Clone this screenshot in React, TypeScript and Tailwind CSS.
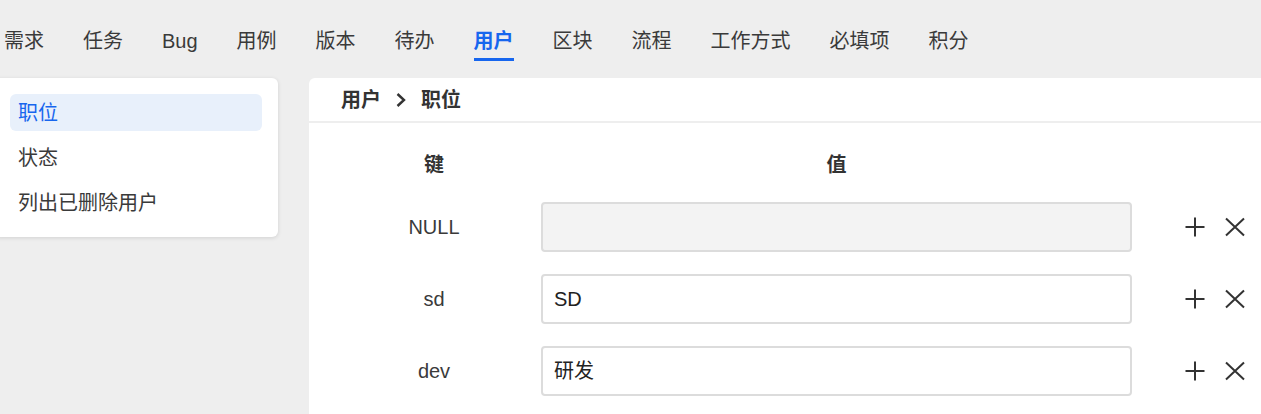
import React from 'react';

const TABS = ['需求', '任务', 'Bug', '用例', '版本', '待办', '用户', '区块', '流程', '工作方式', '必填项', '积分'];
const MENU = ['职位', '状态', '列出已删除用户'];
const ROWS = [
  { key: 'NULL', value: '', disabled: true },
  { key: 'sd', value: 'SD', disabled: false },
  { key: 'dev', value: '研发', disabled: false },
];

const PlusIcon = () => (
  <svg width="20" height="20" viewBox="0 0 20 20" fill="none" stroke="#333" strokeWidth="2">
    <path d="M10 0.5V19.5M0.5 10H19.5" />
  </svg>
);

const CloseIcon = () => (
  <svg width="20" height="20" viewBox="0 0 20 20" fill="none" stroke="#333" strokeWidth="2">
    <path d="M1 1.5L19 18.5M19 1.5L1 18.5" />
  </svg>
);

const App: React.FC = () => {
  return (
    <div
      className="w-full h-[414px] bg-[#eeeeee] overflow-hidden text-[#333333] flex flex-col"
      style={{ fontFamily: '"Liberation Sans", "Noto Sans CJK SC", sans-serif' }}
    >
      {/* Top tabs */}
      <nav className="h-[78px] shrink-0 flex items-start gap-[39px] pl-[4px] pt-[28px]">
        {TABS.map((tab) => {
          const active = tab === '用户';
          return (
            <div key={tab} className="flex flex-col">
              <span
                className={`text-[20px] leading-[26px] whitespace-nowrap ${
                  active ? 'text-[#1766ee] font-bold' : 'text-[#3a3a3a]'
                }`}
              >
                {tab}
              </span>
              <span className={`mt-[4px] h-[3px] ${active ? 'bg-[#1766ee]' : 'bg-transparent'}`}></span>
            </div>
          );
        })}
      </nav>

      <div className="flex-1 flex gap-[31px] min-h-0">
        {/* Side menu */}
        <aside className="-ml-[6px] w-[284px] shrink-0 self-start bg-white rounded-[6px] shadow-[0_1px_4px_rgba(0,0,0,0.12)] p-[16px] flex flex-col gap-[8px]">
          {MENU.map((item, idx) => (
            <div
              key={item}
              className={`h-[37px] px-[8px] flex items-center rounded-[6px] text-[20px] leading-[26px] ${
                idx === 0 ? 'bg-[#e8f0fb] text-[#1766ee]' : 'text-[#3a3a3a]'
              }`}
            >
              {item}
            </div>
          ))}
        </aside>

        {/* Main panel */}
        <main className="flex-1 min-w-0 bg-white rounded-tl-[6px] flex flex-col">
          <div className="h-[45px] shrink-0 border-b-2 border-[#eeeeee] flex items-center gap-[15px] pl-[32px] text-[20px] leading-[26px] font-bold text-[#333]">
            <span>用户</span>
            <svg width="10" height="14" viewBox="0 0 10 14" fill="none" stroke="#333" strokeWidth="2.4">
              <path d="M1.5 1L8 7L1.5 13" />
            </svg>
            <span>职位</span>
          </div>

          <div className="pl-[20px] pt-[22px] flex flex-col">
            <div className="h-[40px] flex items-center text-[20px] leading-[26px] font-bold">
              <div className="w-[210px] text-center">键</div>
              <div className="ml-[2px] w-[591px] text-center">值</div>
            </div>
            <div className="mt-[17px] flex flex-col gap-[22px]">
              {ROWS.map((row) => (
                <div key={row.key} className="h-[50px] flex items-center">
                  <div className="w-[210px] text-center text-[20px] leading-[26px] text-[#3a3a3a]">{row.key}</div>
                  <div
                    className={`ml-[2px] w-[591px] h-[50px] border-2 border-[#dcdcdc] rounded-[4px] px-[11px] flex items-center text-[20px] leading-[26px] text-[#222] ${
                      row.disabled ? 'bg-[#f3f3f3]' : 'bg-white'
                    }`}
                  >
                    {row.value}
                  </div>
                  <div className="ml-[53px] flex items-center gap-[20px]">
                    <PlusIcon />
                    <CloseIcon />
                  </div>
                </div>
              ))}
            </div>
          </div>
        </main>
      </div>
    </div>
  );
};

export default App;
